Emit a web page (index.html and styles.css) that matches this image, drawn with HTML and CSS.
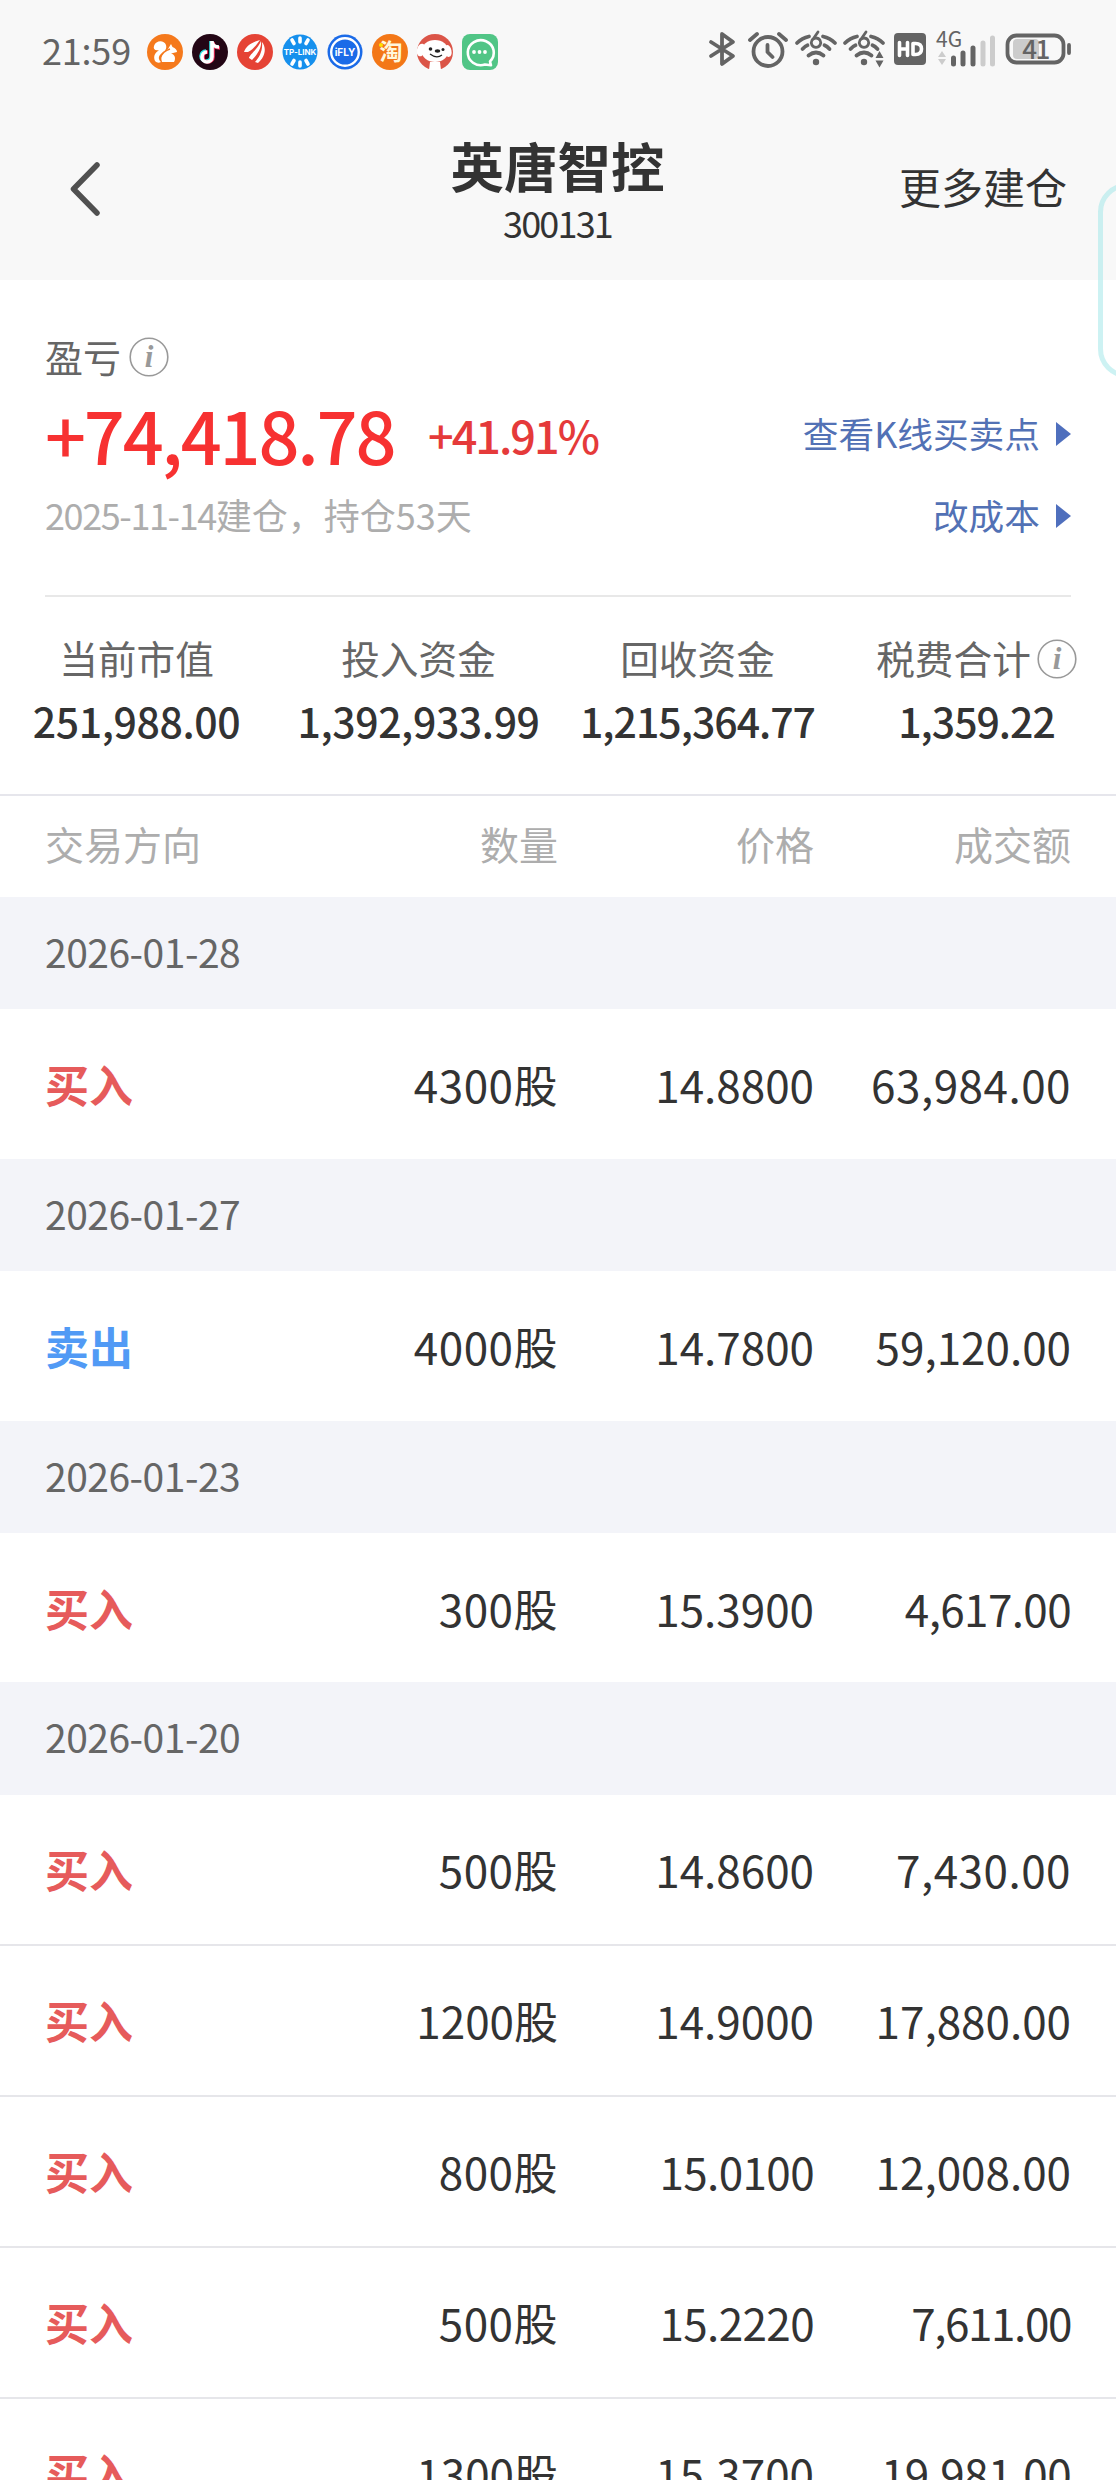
FILE: index.html
```html
<!DOCTYPE html>
<html lang="zh-CN">
<head>
    <meta charset="UTF-8">
    <meta name="viewport" content="width=device-width, initial-scale=1.0">
    <title>英唐智控 300131</title>
    <link rel="stylesheet" href="styles.css">
</head>
<body>
    <div class="page">
        <header class="top">
            <!-- 系统状态栏 -->
            <div class="status-bar">
                <span class="clock">21:59</span>
                <div class="app-icons">
                    <svg viewBox="0 0 36 36"><circle cx="18" cy="18" r="18" fill="#f5791c"/><path d="M8 27c-2-5 0-8 4-11-4 1-6-1-5-4 2-6 10-6 12-1 1 4-1 6-4 8-4 3-4 6-1 9-2 1-4 1-6-1zM15 28c-2-6 1-10 6-13l3-5 1.500 3c3 1 4.500 3 4.500 5l-6 1.500c4 1 5 5 3 8.500z" fill="#fff"/><path d="M13 24q3-7 10-9" fill="none" stroke="#f5791c" stroke-width="1.5"/></svg>
                    <svg viewBox="0 0 36 36"><circle cx="18" cy="18" r="18" fill="#230615"/><g fill="none" stroke-width="3.6"><path d="M19 7v15a5 5 0 1 1-5-5M19 8q1 5 7 5" stroke="#2de5e4"/><path d="M21 8v15a5 5 0 1 1-5-5M21 9q1 5 7 5" stroke="#ef2b59"/><path d="M20 7v16a5 5 0 1 1-5-5M20 8q1 5 7 5" stroke="#fff"/></g></svg>
                    <svg viewBox="0 0 36 36"><circle cx="18" cy="18" r="18" fill="#e54335"/><path d="M7 18C9 12 15 8 23 6c-3 4-7 10-12 12zM12 24c0-3 9-9 12-17 1 7-4 14-9 19zM18 28c4-4 8-11 7-20 5 6 3 15-4 21z" fill="#fff"/></svg>
                    <svg viewBox="0 0 36 36"><circle cx="18" cy="18" r="17.5" fill="#1690ed"/><g stroke="#fff" stroke-width="3.6" stroke-linecap="round"><path d="M18 4v4M10 6l2 3.500M26 6l-2 3.500M18 32v-4M10 30l2-3.500M26 30l-2-3.500"/></g><text x="18" y="20.6" text-anchor="middle" class="logo-tp">TP-LINK</text></svg>
                    <svg viewBox="0 0 36 36"><circle cx="18" cy="18" r="17.5" fill="#1b6be8"/><circle cx="18" cy="18" r="13.8" fill="none" stroke="#fff" stroke-width="2.4"/><text x="18" y="21.5" text-anchor="middle" class="logo-fly">iFLY</text></svg>
                    <svg viewBox="0 0 36 36"><circle cx="18" cy="18" r="18" fill="#f37717"/><circle cx="9" cy="11" r="2" fill="#ffe100"/><text x="19" y="26" text-anchor="middle" class="logo-tao">淘</text></svg>
                    <svg viewBox="0 0 36 36"><circle cx="18" cy="18" r="18" fill="#db5548"/><g fill="#fff"><ellipse cx="18" cy="17" rx="13.500" ry="11"/><ellipse cx="4" cy="16" rx="4" ry="6.500" transform="rotate(15 4 16)"/><ellipse cx="31" cy="17" rx="3.500" ry="6" transform="rotate(-12 31 17)"/><path d="M12 36l1-8h10l1 8q-6 1-12 0z"/></g><circle cx="13.500" cy="15" r="1.8" fill="#222"/><circle cx="26" cy="15.500" r="1.5" fill="#222"/><ellipse cx="20.500" cy="17" rx="2.800" ry="1.7" fill="#222"/><path d="M13 20q6.500 5 12 1" fill="none" stroke="#222" stroke-width="1.2"/></svg>
                    <svg viewBox="0 0 36 36"><rect width="36" height="36" rx="8" fill="#51c586"/><path d="M28 27.500a13 12.500 0 1 0-5 3l6 .8z" fill="none" stroke="#fff" stroke-width="2.6" stroke-linejoin="round"/><g fill="#fff"><circle cx="12" cy="18" r="1.9"/><circle cx="17.500" cy="18" r="1.9"/><circle cx="23" cy="18" r="1.9"/></g></svg>
                </div>
                <div class="sys-icons">
                    <svg class="bt" viewBox="0 0 27 36"><path d="M2 11l11 7 11 7-11 8V3l11 8-11 7-11 7"/></svg>
                    <svg class="alarm" viewBox="0 0 40 37"><circle cx="20" cy="20.500" r="14.5"/><path d="M19.500 14v7l5 5M2 9l7-6M38 9l-7-6"/></svg>
                    <svg class="wifi" viewBox="0 0 42 36"><path d="M2 12Q7 7 14 5.500M28 5.500Q35 7 40 12M7.500 18q3-3 5-3.700M29.500 14.300q2.500 1 5 3.700M13.500 24.500q7.500-6 15 0"/><circle class="solid" cx="21" cy="31" r="3.2"/><path class="six" d="M23 1l-5.200 7.500M21 7a4.700 4.700 0 1 0 .01 0z"/></svg>
                    <svg class="wifi" viewBox="0 0 42 36"><path d="M2 12Q7 7 14 5.500M28 5.500Q35 7 40 12M7.500 18q3-3 5-3.700M29.500 14.300q2.500 1 5 3.700M13.500 24.500q7.500-6 15 0"/><circle class="solid" cx="21" cy="31" r="3.2"/><path class="six" d="M23 1l-5.200 7.500M21 7a4.700 4.700 0 1 0 .01 0z"/><path class="solid" d="M32.500 27l4-7 4 7zM32.500 29.500l4 7 4-7z"/></svg>
                    <svg class="hd" viewBox="0 0 32 32"><rect width="32" height="32" rx="4"/><path d="M5.500 9.500v13M13.500 9.500v13M5.500 16h8M19 10.500v11h2.500q6 0 6-5.500t-6-5.500z"/></svg>
                    <svg class="signal" viewBox="0 0 60 34"><text x="0" y="15">4G</text><path class="faint" d="M2 25l4-6 4 6zM2 27l4 6 4-6z"/><path d="M17.500 26v6M27 21v11M37 16v16"/><path class="off" d="M47 11v21M56.500 6v26"/></svg>
                    <svg class="battery" viewBox="0 0 66 32"><rect class="level" x="7" y="6" width="26" height="20" rx="4"/><rect x="1.500" y="2.500" width="56" height="27" rx="9"/><path d="M63 12v8"/><text x="29.500" y="25.500" text-anchor="middle">41</text></svg>
                </div>
            </div>

            <div class="nav">
                <svg class="back" viewBox="0 0 32 56"><path d="M28 4L4.500 28 28 52"/></svg>
                <div class="nav-title">
                    <h1>英唐智控</h1>
                    <p>300131</p>
                </div>
                <a class="more">更多建仓</a>
            </div>
        </header>

        <div class="float-tab"></div>

        <!-- 盈亏概览 -->
        <section class="profit">
            <div class="profit-label"><span>盈亏</span><svg class="info" viewBox="0 0 40 40"><circle cx="20" cy="20" r="18.800"/><text x="20" y="30" text-anchor="middle">i</text></svg></div>
            <div class="profit-row">
                <strong class="amount">+74,418.78</strong>
                <span class="percent">+41.91%</span>
                <a class="link"><span>查看K线买卖点</span><i class="arrow"></i></a>
            </div>
            <div class="profit-row sub">
                <span class="note"><span class="open-date">2025-11-14</span>建仓，持仓53天</span>
                <a class="link"><span>改成本</span><i class="arrow"></i></a>
            </div>
        </section>

        <section class="summary">
            <div class="cell"><span class="name">当前市值</span><b>251,988.00</b></div>
            <div class="cell"><span class="name">投入资金</span><b>1,392,933.99</b></div>
            <div class="cell"><span class="name">回收资金</span><b class="snug">1,215,364.77</b></div>
            <div class="cell"><span class="name">税费合计<svg class="info" viewBox="0 0 40 40"><circle cx="20" cy="20" r="18.800"/><text x="20" y="30" text-anchor="middle">i</text></svg></span><b class="snug">1,359.22</b></div>
        </section>

        <!-- 成交明细 -->
        <section class="trades">
            <div class="row head"><span>交易方向</span><span>数量</span><span>价格</span><span>成交额</span></div>

            <div class="date">2026-01-28</div>
            <div class="row"><span class="buy">买入</span><span class="loose">4300股</span><span>14.8800</span><span class="loose">63,984.00</span></div>

            <div class="date">2026-01-27</div>
            <div class="row"><span class="sell">卖出</span><span class="loose">4000股</span><span>14.7800</span><span>59,120.00</span></div>

            <div class="date">2026-01-23</div>
            <div class="row"><span class="buy">买入</span><span class="loose">300股</span><span>15.3900</span><span class="snug">4,617.00</span></div>

            <div class="date">2026-01-20</div>
            <div class="row line"><span class="buy">买入</span><span class="loose">500股</span><span>14.8600</span><span class="loose">7,430.00</span></div>
            <div class="row line"><span class="buy">买入</span><span>1200股</span><span>14.9000</span><span>17,880.00</span></div>
            <div class="row line"><span class="buy">买入</span><span class="loose">800股</span><span class="snug">15.0100</span><span>12,008.00</span></div>
            <div class="row line"><span class="buy">买入</span><span class="loose">500股</span><span class="snug">15.2220</span><span class="tight">7,611.00</span></div>
            <div class="row line"><span class="buy">买入</span><span>1300股</span><span>15.3700</span><span class="snug">19,981.00</span></div>
        </section>
    </div>
</body>
</html>
```
FILE: styles.css
```css
* {
    box-sizing: border-box;
}

html, body {
    margin: 0;
    padding: 0;
    height: 100%;
    overflow: hidden;
}

body {
    font-family: "Noto Sans CJK SC", sans-serif;
    color: #333;
    background: #fff;
}

h1, p {
    margin: 0;
}

svg {
    display: block;
    flex: none;
}

.page {
    position: relative;
    width: 1116px;
    height: 2480px;
    overflow: hidden;
}

.top {
    height: 280px;
    background: #f8f8f8;
}

/* 状态栏 */
.status-bar {
    display: flex;
    align-items: center;
    height: 104px;
    padding: 0 44px 0 42px;
}

.clock {
    width: 105px;
    padding-bottom: 6px;
    font-size: 36px;
    line-height: 52px;
    letter-spacing: -0.2px;
    color: #646464;
}

.app-icons {
    display: flex;
    gap: 9px;
}

.app-icons svg {
    width: 36px;
    height: 36px;
}

.logo-tp {
    font: 700 8px Inter, sans-serif;
    fill: #fff;
}

.logo-fly {
    font: 700 10px Inter, sans-serif;
    fill: #fff;
}

.logo-tao {
    font-size: 23px;
    font-weight: 700;
    fill: #fff7dc;
}

.sys-icons {
    display: flex;
    align-items: center;
    margin-left: auto;
    margin-top: -6px;
}

.sys-icons svg {
    fill: none;
    stroke: #646464;
    stroke-width: 3.8;
    stroke-linecap: round;
    stroke-linejoin: round;
    overflow: visible;
}

.sys-icons text,
.sys-icons .solid {
    fill: #646464;
    stroke: none;
}

.bt {
    width: 27px;
    height: 36px;
    margin-right: 12px;
}

.alarm {
    width: 40px;
    height: 37px;
    margin-right: 7px;
}

.wifi {
    width: 42px;
    height: 36px;
    margin-right: 6px;
}

.wifi .six {
    stroke-width: 2.8;
}

.sys-icons .hd {
    width: 32px;
    height: 32px;
    margin-left: 3px;
    margin-right: 10px;
    stroke: none;
}

.hd rect {
    fill: #646464;
}

.hd path {
    stroke: #fff;
    stroke-width: 3.6;
}

.sys-icons .signal {
    width: 60px;
    height: 34px;
    margin-right: 10px;
    stroke-width: 5;
}

.signal text {
    font-size: 21px;
}

.sys-icons .faint {
    fill: #ccc;
    stroke: none;
}

.signal .off {
    stroke: #ccc;
}

.battery {
    width: 66px;
    height: 32px;
}

.sys-icons .level {
    fill: #ccc;
    stroke: none;
}

.battery text {
    font-size: 26px;
    font-weight: 500;
    letter-spacing: -1.5px;
}

/* 导航 */
.nav {
    display: grid;
    grid-template-columns: 1fr auto 1fr;
    align-items: start;
    padding: 30px 49px 0 69px;
}

.back {
    width: 32px;
    height: 56px;
    margin-top: 27px;
    fill: none;
    stroke: #505050;
    stroke-width: 5.5;
    stroke-linecap: round;
    stroke-linejoin: round;
}

.nav-title {
    text-align: center;
    margin-left: -21px;
}

.nav-title h1 {
    font-size: 53.500px;
    line-height: 62px;
    font-weight: 700;
}

.nav-title p {
    font-size: 36px;
    line-height: 52px;
    letter-spacing: -1.8px;
}

.more {
    justify-self: end;
    font-size: 42px;
    line-height: 60px;
    margin-top: 22px;
}

/* 右侧悬浮边框 */
.float-tab {
    position: absolute;
    top: 183px;
    right: -40px;
    width: 58px;
    height: 195px;
    border: 5px solid rgba(155, 230, 232, 0.5);
    border-radius: 30px;
}

/* 盈亏 */
.profit {
    height: 317px;
    margin: 0 45px;
    padding-top: 50px;
    border-bottom: 2px solid #e8e8e8;
}

.profit-label {
    display: flex;
    align-items: center;
    height: 54px;
    gap: 8px;
    font-size: 38px;
    color: #666;
}

.profit-label span,
.link span,
.note {
    padding-bottom: 4px;
}

.info {
    width: 40px;
    height: 40px;
}

.info circle {
    fill: none;
    stroke: #999;
    stroke-width: 1.6;
}

.info text {
    font: italic 700 31px "Liberation Serif", serif;
    fill: #999;
}

.profit-row {
    display: flex;
    align-items: center;
    height: 100px;
}

.profit-row.sub {
    height: 64px;
}

.amount {
    width: 383px;
    font-size: 72px;
    line-height: 100px;
    font-weight: 500;
    letter-spacing: -2.2px;
    color: #f73131;
}

.percent {
    font-size: 45px;
    font-weight: 500;
    letter-spacing: -2px;
    color: #e53a3a;
}

.note {
    font-size: 36px;
    color: #adadad;
}

.open-date {
    letter-spacing: -1.4px;
}

.link {
    display: flex;
    align-items: center;
    gap: 16px;
    margin-left: auto;
    font-size: 35.700px;
    color: #5271b5;
}

.arrow {
    border-left: 15px solid #4f6fbd;
    border-top: 12px solid transparent;
    border-bottom: 12px solid transparent;
}

/* 资金汇总 */
.summary {
    display: grid;
    grid-template-columns: repeat(4, 1fr);
    height: 199px;
    padding-top: 32px;
    border-bottom: 2px solid #e6e6ec;
}

.cell {
    display: flex;
    flex-direction: column;
    align-items: center;
}

.cell:first-child {
    padding-right: 6px;
}

.cell .name {
    display: flex;
    align-items: center;
    gap: 6px;
    height: 56px;
    font-size: 38.700px;
    color: #666;
}

.cell .info {
    margin-top: 4px;
}

.cell b {
    font-size: 41px;
    line-height: 70px;
    font-weight: 500;
    letter-spacing: -0.4px;
}

.cell .snug {
    letter-spacing: -1px;
}

/* 明细 */
.row {
    display: grid;
    grid-template-columns: 200px 313px 256px 257px;
    align-items: center;
    height: 149.400px;
    padding: 0 45px;
    font-size: 44px;
    text-align: right;
}

.row span:first-child {
    text-align: left;
}

.row.head {
    height: 101px;
    padding-bottom: 7px;
    font-size: 39px;
    color: #adadad;
}

.row.line {
    height: 151px;
    border-bottom: 2px solid #e6e6ea;
}

.date {
    height: 112.400px;
    padding-left: 45px;
    font-size: 39px;
    line-height: 108px;
    letter-spacing: -0.5px;
    color: #666;
    background: #f3f4f9;
}

.buy, .sell {
    font-weight: 700;
}

.buy {
    color: #e65b5b;
}

.sell {
    color: #519af5;
}

.row .loose {
    letter-spacing: 0.5px;
}

.row .snug {
    letter-spacing: -0.6px;
}

.row .tight {
    letter-spacing: -1.4px;
}
```
